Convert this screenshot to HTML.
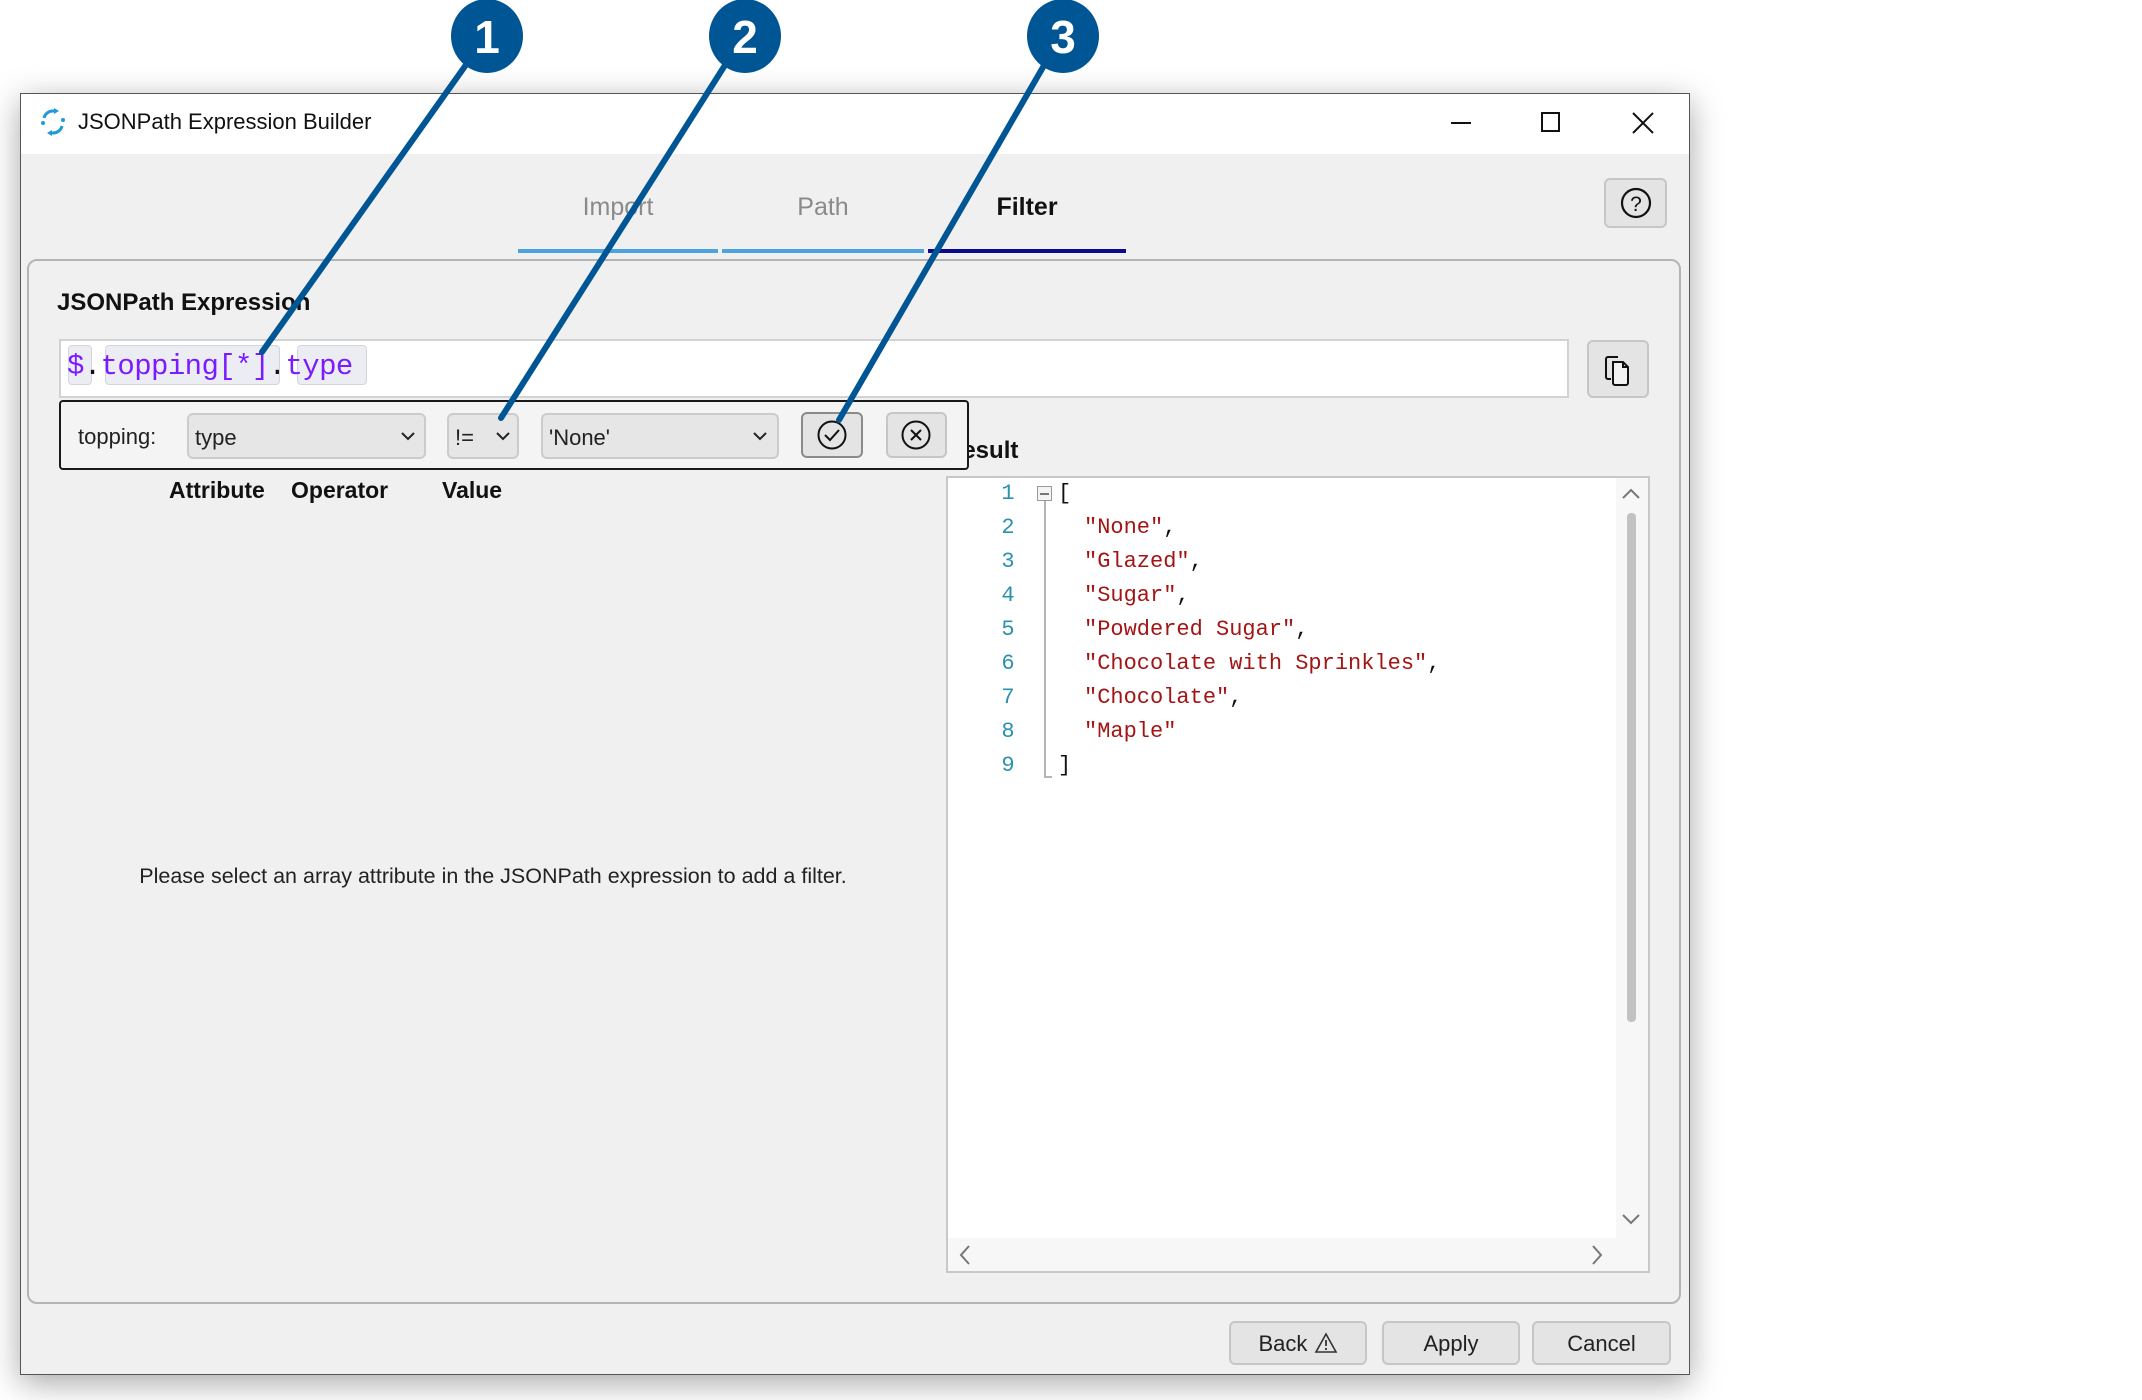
<!DOCTYPE html>
<html><head><meta charset="utf-8">
<style>
*{box-sizing:border-box;margin:0;padding:0}
body{width:2142px;height:1400px;background:#fff;position:relative;overflow:hidden;font-family:"Liberation Sans",sans-serif;color:#1a1a1a}
.a{position:absolute}
.win{left:20px;top:93px;width:1670px;height:1282px;background:#f0f0f0;border:1px solid #555;box-shadow:0 8px 30px rgba(0,0,0,.35)}
.title{left:0;top:0;width:100%;height:60px;background:#fff}
.btn{background:#e4e4e4;border:2px solid #c6c6c6;border-radius:6px}
.sel{background:#e6e6e6;border:2px solid #cbcbcb;border-radius:6px;font-size:22px;color:#222}
.mono{font-family:"Liberation Mono",monospace}
.ln{position:absolute;left:0;width:130px;text-align:center;color:#2b91af;font-size:22px}
.str{position:absolute;left:1084px;color:#a31515;font-size:22px;white-space:pre}
.chip{background:#ececf3;border:1px solid #d4d4dc;border-radius:4px}
</style></head><body>
<div class="a win">
 <div class="a title"></div>
</div>
<svg class="a" style="left:38px;top:106px" width="30" height="32" viewBox="0 0 30 32">
<path d="M6 12 A9 9 0 0 1 15 5 L18 5" stroke="#1e9ad6" stroke-width="3" fill="none"/>
<path d="M16 2 L21 5 L16 8" fill="#1e9ad6"/>
<path d="M24 20 A9 9 0 0 1 15 27 L12 27" stroke="#1e9ad6" stroke-width="3" fill="none"/>
<path d="M14 24 L9 27 L14 30" fill="#1e9ad6"/>
<circle cx="5" cy="17" r="2" fill="#1e9ad6"/><circle cx="25" cy="14" r="2" fill="#1e9ad6"/>
</svg>
<div class="a" style="left:78px;top:109px;font-size:22px;color:#111">JSONPath Expression Builder</div>
<div class="a" style="left:1451px;top:122px;width:20px;height:2px;background:#111"></div>
<div class="a" style="left:1541px;top:112px;width:19px;height:20px;border:2px solid #111"></div>
<svg class="a" style="left:1632px;top:112px" width="22" height="22"><path d="M1 1L21 21M21 1L1 21" stroke="#111" stroke-width="2"/></svg>
<div class="a" style="left:518px;top:193px;width:200px;text-align:center;font-size:25px;color:#8a8a8a">Import</div>
<div class="a" style="left:722px;top:193px;width:202px;text-align:center;font-size:25px;color:#8a8a8a">Path</div>
<div class="a" style="left:928px;top:193px;width:198px;text-align:center;font-size:25px;font-weight:bold;color:#111">Filter</div>
<div class="a" style="left:518px;top:249px;width:200px;height:4px;background:#4da3e0"></div>
<div class="a" style="left:722px;top:249px;width:202px;height:4px;background:#4da3e0"></div>
<div class="a" style="left:928px;top:249px;width:198px;height:4px;background:#0a0a8a"></div>
<div class="a btn" style="left:1604px;top:178px;width:63px;height:50px"></div>
<svg class="a" style="left:1619px;top:186px" width="34" height="34"><circle cx="17" cy="17" r="14" stroke="#111" stroke-width="2.2" fill="none"/><text x="17" y="25" text-anchor="middle" font-family="Liberation Sans" font-size="21" fill="#111">?</text></svg>
<div class="a" style="left:27px;top:259px;width:1654px;height:1045px;border:2px solid #b4b4b4;border-radius:10px"></div>
<div class="a" style="left:57px;top:289px;font-size:24px;font-weight:bold;color:#111">JSONPath Expression</div>
<div class="a" style="left:59px;top:339px;width:1510px;height:59px;background:#fff;border:2px solid #d2d2d2"></div>
<div class="a chip" style="left:68px;top:345px;width:24px;height:40px"></div>
<div class="a chip" style="left:105px;top:345px;width:175px;height:40px"></div>
<div class="a chip" style="left:297px;top:345px;width:70px;height:40px"></div>
<div class="a mono" style="left:67px;top:350px;font-size:29px;color:#7a1cff;white-space:pre;letter-spacing:-0.6px">$<span style="color:#111">.</span>topping[*]<span style="color:#111">.</span>type</div>
<div class="a btn" style="left:1587px;top:340px;width:62px;height:58px"></div>
<svg class="a" style="left:1600px;top:352px" width="36" height="36" viewBox="0 0 36 36"><path d="M18 5 H8 a2 2 0 0 0-2 2 V25 a2 2 0 0 0 2 2 H11" stroke="#111" stroke-width="2" fill="none"/><path d="M13 10 H23 L28 15 V31 a2 2 0 0 1-2 2 H15 a2 2 0 0 1-2-2 Z" stroke="#111" stroke-width="2" fill="#f2f2f2"/><path d="M23 10 V15 H28" stroke="#111" stroke-width="2" fill="none"/></svg>
<div class="a" style="left:945px;top:437px;font-size:24px;font-weight:bold;color:#111">Result</div>
<div class="a" style="left:59px;top:400px;width:910px;height:70px;background:#f4f4f4;border:2px solid #1a1a1a;border-radius:4px"></div>
<div class="a" style="left:78px;top:424px;font-size:22px;color:#222">topping:</div>
<div class="a sel" style="left:187px;top:413px;width:239px;height:46px;padding:10px 6px">type</div>
<div class="a sel" style="left:447px;top:413px;width:72px;height:46px;padding:10px 6px">!=</div>
<div class="a sel" style="left:541px;top:413px;width:238px;height:46px;padding:10px 6px">'None'</div>
<svg class="a" style="left:400px;top:430px" width="16" height="12"><path d="M2 3L8 9L14 3" stroke="#222" stroke-width="2" fill="none"/></svg>
<svg class="a" style="left:495px;top:430px" width="16" height="12"><path d="M2 3L8 9L14 3" stroke="#222" stroke-width="2" fill="none"/></svg>
<svg class="a" style="left:752px;top:430px" width="16" height="12"><path d="M2 3L8 9L14 3" stroke="#222" stroke-width="2" fill="none"/></svg>
<div class="a btn" style="left:801px;top:412px;width:62px;height:46px;border-color:#8a8a8a"></div>
<svg class="a" style="left:816px;top:419px" width="32" height="32"><circle cx="16" cy="16" r="13.5" stroke="#111" stroke-width="2" fill="none"/><path d="M9 16L14 21L23 11" stroke="#111" stroke-width="2" fill="none"/></svg>
<div class="a btn" style="left:886px;top:412px;width:61px;height:46px"></div>
<svg class="a" style="left:900px;top:419px" width="32" height="32"><circle cx="16" cy="16" r="13.5" stroke="#111" stroke-width="2" fill="none"/><path d="M11 11L21 21M21 11L11 21" stroke="#111" stroke-width="2"/></svg>
<div class="a" style="left:169px;top:477px;font-size:23px;font-weight:bold;color:#111">Attribute</div>
<div class="a" style="left:291px;top:477px;font-size:23px;font-weight:bold;color:#111">Operator</div>
<div class="a" style="left:442px;top:477px;font-size:23px;font-weight:bold;color:#111">Value</div>
<div class="a" style="left:40px;top:864px;width:906px;text-align:center;font-size:21.5px;color:#222">Please select an array attribute in the JSONPath expression to add a filter.</div>
<div class="a" style="left:946px;top:476px;width:704px;height:797px;background:#fff;border:2px solid #c8c8c8"></div>
<div class="a" style="left:1616px;top:478px;width:32px;height:760px;background:#f7f7f7"></div>
<div class="a" style="left:948px;top:1238px;width:700px;height:33px;background:#f7f7f7"></div>
<div class="a" style="left:1627px;top:513px;width:9px;height:509px;background:#c2c2c2;border-radius:4px"></div>
<svg class="a" style="left:1621px;top:487px" width="20" height="14"><path d="M2 11L10 3L18 11" stroke="#777" stroke-width="2" fill="none"/></svg>
<svg class="a" style="left:1621px;top:1212px" width="20" height="14"><path d="M2 3L10 11L18 3" stroke="#777" stroke-width="2" fill="none"/></svg>
<svg class="a" style="left:958px;top:1244px" width="14" height="22"><path d="M11 2L3 11L11 20" stroke="#777" stroke-width="2" fill="none"/></svg>
<svg class="a" style="left:1590px;top:1244px" width="14" height="22"><path d="M3 2L11 11L3 20" stroke="#777" stroke-width="2" fill="none"/></svg>
<div class="a mono" style="left:0;top:0">
 <div class="ln" style="left:943px;top:481px">1</div>
 <div class="ln" style="left:943px;top:515px">2</div>
 <div class="ln" style="left:943px;top:549px">3</div>
 <div class="ln" style="left:943px;top:583px">4</div>
 <div class="ln" style="left:943px;top:617px">5</div>
 <div class="ln" style="left:943px;top:651px">6</div>
 <div class="ln" style="left:943px;top:685px">7</div>
 <div class="ln" style="left:943px;top:719px">8</div>
 <div class="ln" style="left:943px;top:753px">9</div>
 <div class="a" style="left:1037px;top:486px;width:15px;height:15px;border:1.5px solid #999;background:#f4f4f4"></div>
 <div class="a" style="left:1040px;top:493px;width:9px;height:1.5px;background:#777"></div>
 <div class="a" style="left:1044px;top:501px;width:2px;height:277px;background:#b5b5b5"></div>
 <div class="a" style="left:1044px;top:776px;width:8px;height:2px;background:#b5b5b5"></div>
 <div class="a" style="left:1058px;top:481px;font-size:22px;color:#111">[</div>
 <div class="a" style="left:1058px;top:753px;font-size:22px;color:#111">]</div>
 <div class="str" style="top:515px">"None"<span style="color:#111">,</span></div>
 <div class="str" style="top:549px">"Glazed"<span style="color:#111">,</span></div>
 <div class="str" style="top:583px">"Sugar"<span style="color:#111">,</span></div>
 <div class="str" style="top:617px">"Powdered Sugar"<span style="color:#111">,</span></div>
 <div class="str" style="top:651px">"Chocolate with Sprinkles"<span style="color:#111">,</span></div>
 <div class="str" style="top:685px">"Chocolate"<span style="color:#111">,</span></div>
 <div class="str" style="top:719px">"Maple"</div>
</div>
<div class="a btn" style="left:1229px;top:1321px;width:138px;height:44px;text-align:center;font-size:22px;padding-top:8px;color:#222">Back <svg width="24" height="22" style="vertical-align:-3px"><path d="M12 2L22 20H2Z" stroke="#333" stroke-width="1.6" fill="none"/><path d="M12 8V14" stroke="#333" stroke-width="1.8"/><circle cx="12" cy="17" r="1.1" fill="#333"/></svg></div>
<div class="a btn" style="left:1382px;top:1321px;width:138px;height:44px;text-align:center;font-size:22px;padding-top:8px;color:#222">Apply</div>
<div class="a btn" style="left:1532px;top:1321px;width:139px;height:44px;text-align:center;font-size:22px;padding-top:8px;color:#222">Cancel</div>
<svg class="a" style="left:0;top:0" width="2142" height="1400">
<g stroke="#005594" stroke-width="6" stroke-linecap="round">
<line x1="468" y1="62" x2="262" y2="352"/>
<line x1="727" y1="62" x2="501" y2="418"/>
<line x1="1046" y1="62" x2="839" y2="420"/>
</g>
<g fill="#005594">
<ellipse cx="487" cy="36" rx="36" ry="37"/>
<ellipse cx="745" cy="36" rx="36" ry="37"/>
<ellipse cx="1063" cy="36" rx="36" ry="37"/>
</g>
<g fill="#fff" font-family="Liberation Sans" font-weight="bold" font-size="46" text-anchor="middle">
<text x="487" y="53">1</text><text x="745" y="53">2</text><text x="1063" y="53">3</text>
</g>
</svg>
</body></html>
